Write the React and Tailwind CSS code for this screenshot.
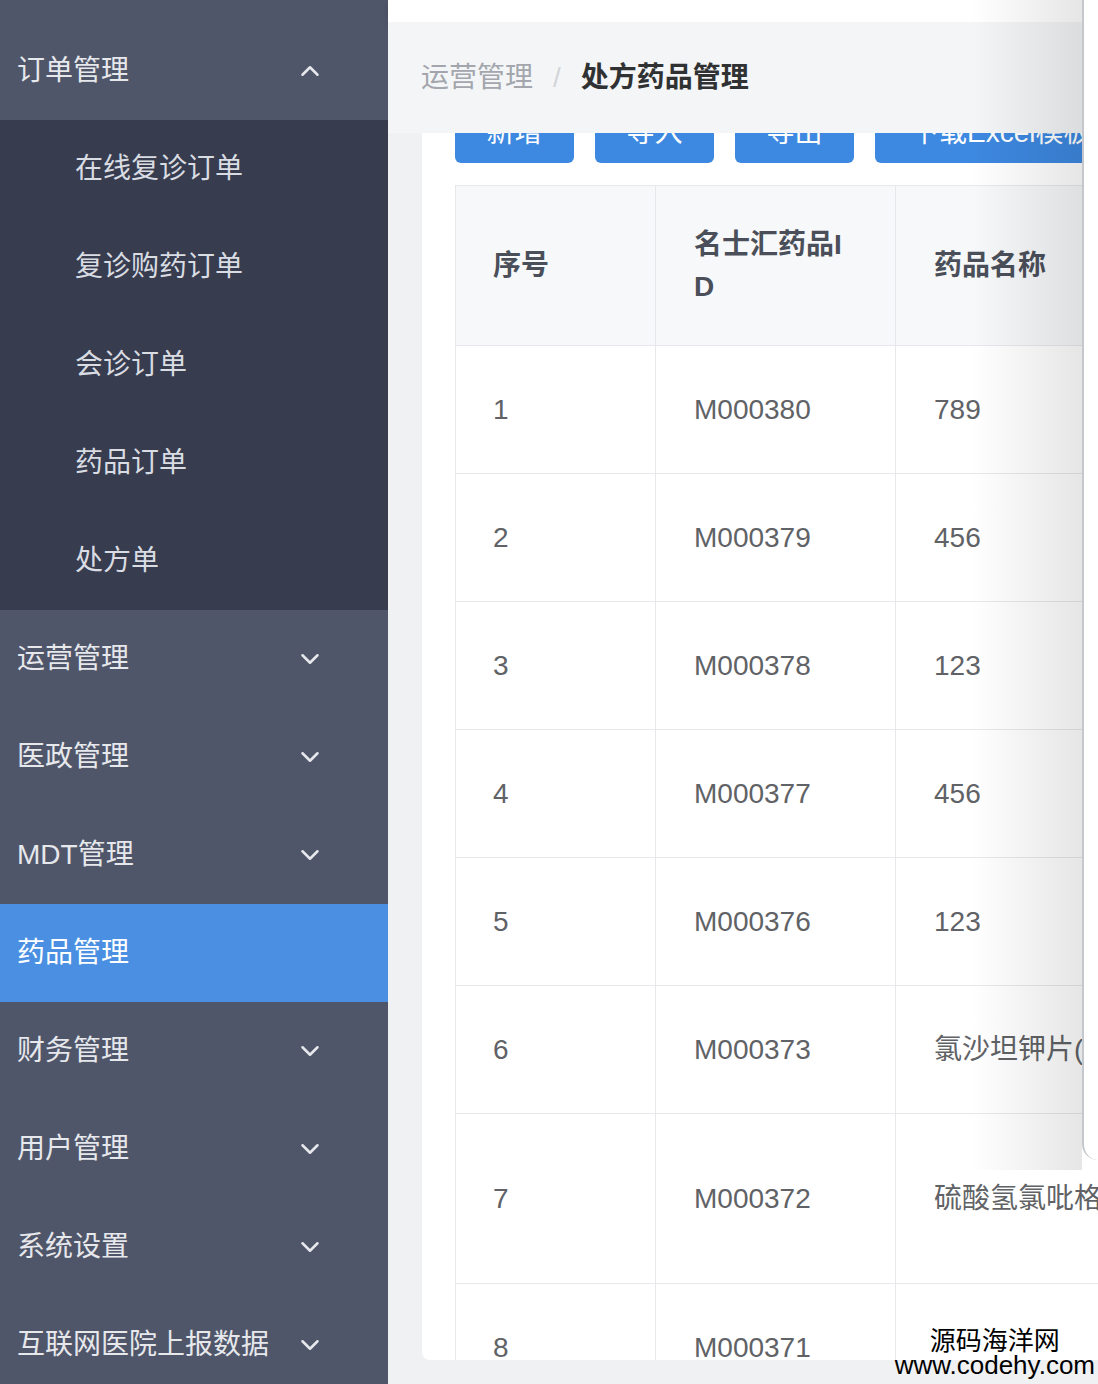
import React from 'react';
import { ChevronDown, ChevronUp } from 'lucide-react';

const subItems = ['在线复诊订单', '复诊购药订单', '会诊订单', '药品订单', '处方单'];
const topItems = ['运营管理', '医政管理', 'MDT管理', '药品管理', '财务管理', '用户管理', '系统设置', '互联网医院上报数据'];

const rows = [
  { no: 1, id: 'M000380', name: '789', h: 'h-[128px]' },
  { no: 2, id: 'M000379', name: '456', h: 'h-[128px]' },
  { no: 3, id: 'M000378', name: '123', h: 'h-[128px]' },
  { no: 4, id: 'M000377', name: '456', h: 'h-[128px]' },
  { no: 5, id: 'M000376', name: '123', h: 'h-[128px]' },
  { no: 6, id: 'M000373', name: '氯沙坦钾片(科素亚)', h: 'h-[128px]' },
  { no: 7, id: 'M000372', name: '硫酸氢氯吡格雷片', h: 'h-[170px]' },
  { no: 8, id: 'M000371', name: '', h: 'h-[128px]' },
];

function Sidebar() {
  return (
    <aside className="w-[388px] shrink-0 bg-[#50566a] flex flex-col text-[28px] text-[#e6e8ec]">
      <div className="h-[120px] shrink-0 pt-[22px] pl-[17px] pr-[70px] flex items-center justify-between">
        <span>订单管理</span>
        <ChevronUp size={30} strokeWidth={2} className="-mr-[7px]" />
      </div>
      <div className="bg-[#373c4f] shrink-0">
        {subItems.map((s) => (
          <div key={s} className="h-[98px] pl-[75px] flex items-center text-[#d9dce2]">
            {s}
          </div>
        ))}
      </div>
      {topItems.map((t) => {
        const active = t === '药品管理';
        return (
          <div
            key={t}
            className={
              active
                ? 'h-[98px] shrink-0 pl-[17px] pr-[70px] flex items-center bg-[#4a8fe2] text-white'
                : 'h-[98px] shrink-0 pl-[17px] pr-[70px] flex items-center justify-between'
            }
          >
            <span>{t}</span>
            {!active && <ChevronDown size={30} strokeWidth={2} className="-mr-[7px]" />}
          </div>
        );
      })}
    </aside>
  );
}

function Content() {
  return (
    <main className="flex-1 min-w-0 bg-[#eff1f3] flex flex-col">
      <div className="h-[22px] shrink-0 bg-white shadow-[0_3px_8px_rgba(0,0,0,0.12)] relative z-10" />
      <div className="h-[111px] shrink-0 bg-[#f4f5f6] flex items-center pl-[33px] text-[28px] relative z-10">
        <span className="text-[#a3a6ad]">运营管理</span>
        <span className="mx-[20px] text-[#d3d5d9] font-light">/</span>
        <span className="font-bold text-[#303133]">处方药品管理</span>
      </div>
      <div className="ml-[34px] h-[1227px] shrink-0 bg-white rounded-bl-lg overflow-hidden">
        <div className="-mt-[30px] pl-[33px] flex gap-[21px]">
          {['新增', '导入', '导出'].map((b) => (
            <button key={b} className="w-[119px] h-[60px] shrink-0 rounded-md bg-[#3d88e0] text-white text-[28px] flex items-center justify-center">
              {b}
            </button>
          ))}
          <button className="h-[60px] shrink-0 rounded-md bg-[#3d88e0] text-white text-[28px] px-[36px] flex items-center whitespace-nowrap">
            下载Excel模板
          </button>
        </div>
        <table className="mt-[22px] ml-[33px] border-collapse text-[28px] text-[#606266] table-fixed w-[1100px]">
          <thead>
            <tr className="h-[160px] bg-[#f7f8f9] text-[#4a4f5a] font-bold">
              <th className="w-[200px] border border-[#e6e8eb] pl-[37px] text-left font-bold">序号</th>
              <th className="w-[240px] border border-[#e6e8eb] pl-[38px] text-left font-bold leading-[42px]">
                名士汇药品I
                <br />D
              </th>
              <th className="w-[260px] border border-[#e6e8eb] pl-[38px] text-left font-bold whitespace-nowrap">药品名称</th>
              <th className="w-[400px] border border-[#e6e8eb] pl-[38px] text-left font-bold">规格</th>
            </tr>
          </thead>
          <tbody>
            {rows.map((r) => (
              <tr key={r.no} className={r.h}>
                <td className="border border-[#e6e8eb] pl-[37px]">{r.no}</td>
                <td className="border border-[#e6e8eb] pl-[38px]">{r.id}</td>
                <td className="border border-[#e6e8eb] pl-[38px] whitespace-nowrap">{r.name}</td>
                <td className="border border-[#e6e8eb] pl-[38px]"></td>
              </tr>
            ))}
          </tbody>
        </table>
      </div>
    </main>
  );
}

export default function App() {
  return (
    <div className="relative w-[1098px] h-[1384px] overflow-hidden flex font-['Liberation_Sans','Noto_Sans_CJK_SC',sans-serif]">
      <Sidebar />
      <Content />
      {/* shade cast by the side drawer on the right */}
      <div className="absolute top-0 right-[16px] w-[110px] h-[1170px] bg-gradient-to-r from-transparent to-black/10 pointer-events-none z-20" />
      <div className="absolute top-0 right-0 w-[16px] h-[1160px] bg-white border-l-2 border-[#c4c7cc] rounded-bl-2xl z-20" />
      <div className="absolute right-[3px] bottom-[6px] flex flex-col items-center text-black text-[26px] leading-[26px] z-30">
        <span className="font-['Noto_Sans_CJK_SC',sans-serif]">源码海洋网</span>
        <span>www.codehy.com</span>
      </div>
    </div>
  );
}
